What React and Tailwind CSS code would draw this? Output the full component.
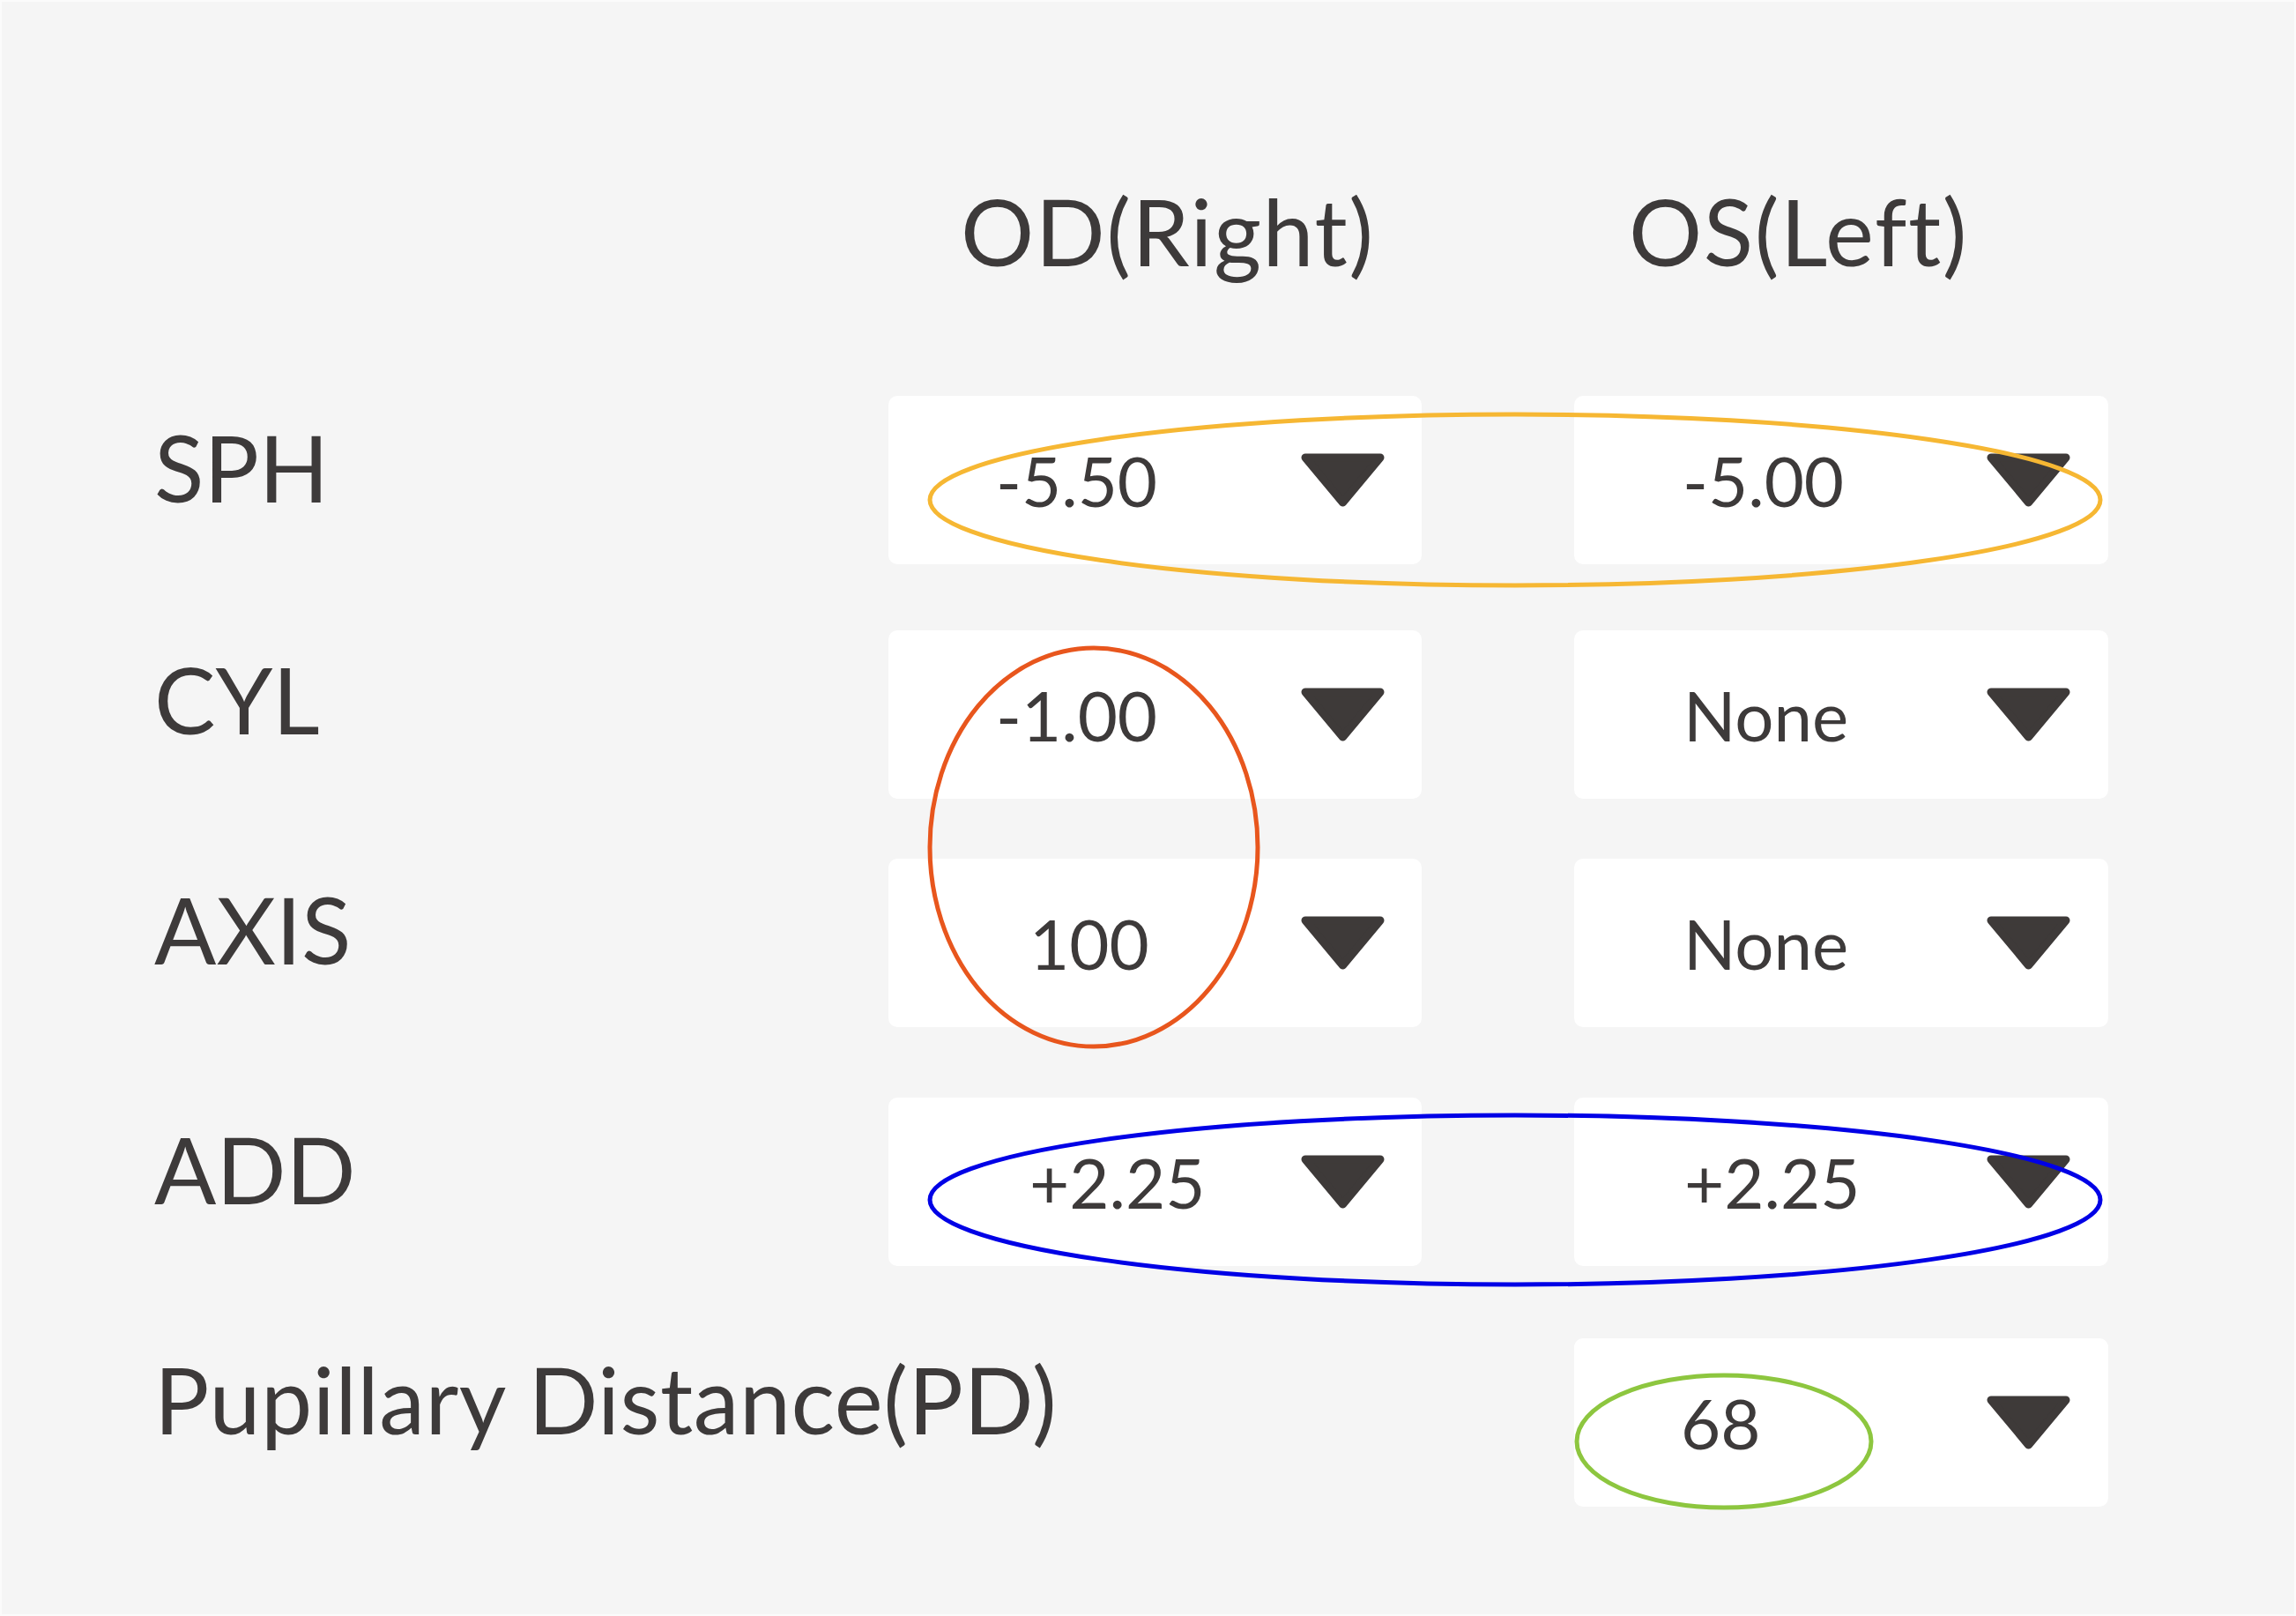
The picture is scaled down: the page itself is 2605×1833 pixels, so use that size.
import React from 'react';

const rows = [
  {
    label: 'SPH',
    gap: 'mt-[135px]',
    lift: 'pb-[30px]',
    od: { value: '-5.50', pad: 'pl-[122px]' },
    os: { value: '-5.00', pad: 'pl-[123px]' },
  },
  {
    label: 'CYL',
    gap: 'mt-[75px]',
    lift: 'pb-[36px]',
    od: { value: '-1.00', pad: 'pl-[122px]' },
    os: { value: 'None', pad: 'pl-[124px]' },
  },
  {
    label: 'AXIS',
    gap: 'mt-[68px]',
    lift: 'pb-[32px]',
    od: { value: '100', pad: 'pl-[160px]' },
    os: { value: 'None', pad: 'pl-[124px]' },
  },
  {
    label: 'ADD',
    gap: 'mt-[80px]',
    lift: 'pb-[30px]',
    od: { value: '+2.25', pad: 'pl-[160px]' },
    os: { value: '+2.25', pad: 'pl-[125px]' },
  },
  {
    label: 'Pupillary Distance(PD)',
    gap: 'mt-[82px]',
    lift: 'pb-[54px] tracking-[0.5px]',
    od: null,
    os: { value: '68', pad: 'pl-[121px]' },
  },
];

function Caret() {
  return (
    <svg width="95" height="61" viewBox="0 0 95 61" className="shrink-0">
      <polygon
        points="5,5 90,5 47.5,56"
        fill="#3e3a39"
        stroke="#3e3a39"
        strokeWidth="9"
        strokeLinejoin="round"
      />
    </svg>
  );
}

function Select({ cell, width }) {
  if (!cell) return <div className={width} />;
  return (
    <div className={`${width} h-[191px] bg-white rounded-[10px] flex items-center`}>
      <div className={`${cell.pad} w-[468px] shrink-0 text-[78px] leading-none`}>{cell.value}</div>
      <Caret />
    </div>
  );
}

export default function App() {
  return (
    <div className="relative w-[2605px] h-[1833px] overflow-hidden bg-[#f5f5f5] border-2 border-[#fbfbfb] text-[#3d3a3a] font-['Lato','Open_Sans',sans-serif]">
      <div className="pt-[208px] pl-[173px]">
        {/* column headers */}
        <div className="flex text-[104px] leading-none tracking-[1.5px]">
          <div className="w-[833px] shrink-0" />
          <div className="w-[605px] shrink-0 pl-[82px]">OD(Right)</div>
          <div className="w-[173px] shrink-0" />
          <div className="w-[606px] shrink-0 pl-[62px]">OS(Left)</div>
        </div>

        {rows.map((row) => (
          <div key={row.label} className={`${row.gap} flex items-center`}>
            <div className={`${row.lift} w-[833px] shrink-0 text-[104px] leading-none whitespace-nowrap`}>{row.label}</div>
            <Select cell={row.od} width="w-[605px] shrink-0" />
            <div className="w-[173px] shrink-0" />
            <Select cell={row.os} width="w-[606px] shrink-0" />
          </div>
        ))}
      </div>

      {/* hand drawn highlight marks over the form */}
      <svg className="absolute inset-0 pointer-events-none" width="2605" height="1833">
        <ellipse cx="1717" cy="565" rx="664" ry="97" fill="none" stroke="#f6b733" strokeWidth="5" />
        <ellipse cx="1239" cy="959" rx="186" ry="226" fill="none" stroke="#e8561d" strokeWidth="5" />
        <ellipse cx="1717" cy="1359" rx="664" ry="96" fill="none" stroke="#0000e6" strokeWidth="5" />
        <ellipse cx="1954" cy="1633" rx="167" ry="75" fill="none" stroke="#8dc63f" strokeWidth="5" />
      </svg>
    </div>
  );
}
